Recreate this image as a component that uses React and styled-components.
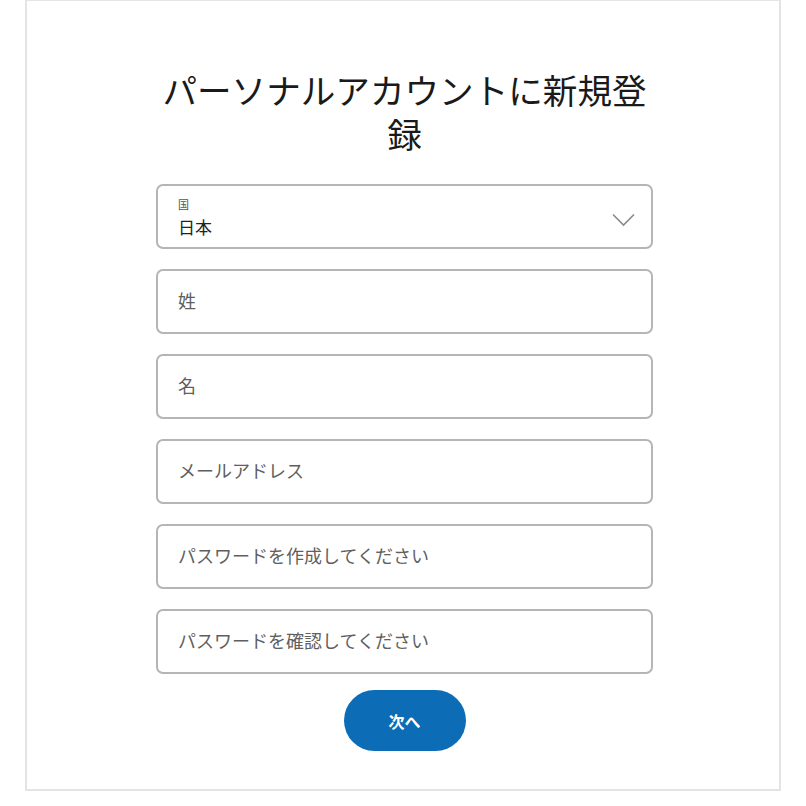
import React from "react";
import styled, { createGlobalStyle } from "styled-components";

const GlobalStyle = createGlobalStyle`
  html, body { margin: 0; padding: 0; background: #ffffff; }
  body { font-family: "Noto Sans CJK JP", "Noto Sans", sans-serif; }
  * { box-sizing: border-box; }
`;

const Frame = styled.div`
  margin-left: 25px;
  width: 756px;
  height: 791px;
  border: 2px solid #e4e4e4;
  border-top-width: 1px;
  display: flex;
  flex-direction: column;
  align-items: center;
  padding-top: 66px;
`;

const Column = styled.div`
  width: 497px;
  margin-left: 3px;
  display: flex;
  flex-direction: column;
  align-items: center;
`;

const Title = styled.h1`
  margin: 0 0 29px;
  width: 100%;
  font-family: "Noto Sans CJK JP", sans-serif;
  font-weight: 400;
  font-size: 34.6px;
  line-height: 44px;
  color: #1a1a1a;
  text-align: center;
`;

const Fields = styled.div`
  width: 100%;
  display: flex;
  flex-direction: column;
  gap: 20px;
`;

const Field = styled.div`
  position: relative;
  height: 65px;
  border: 2px solid #b5b5b5;
  border-radius: 7px;
  display: flex;
  flex-direction: column;
  justify-content: center;
  padding: 0 20px;
`;

const Placeholder = styled.span`
  font-size: 18px;
  line-height: 22px;
  color: #5f5f5f;
  margin-top: -3px;
`;

const SmallLabel = styled.span`
  font-size: 11px;
  line-height: 13px;
  color: #555;
  margin-top: 2px;
`;

const Value = styled.span`
  font-size: 17px;
  line-height: 22px;
  color: #222;
  margin-top: 5px;
`;

const Chevron = styled.svg`
  position: absolute;
  right: 16px;
  top: 50%;
  margin-top: -4px;
`;

const Button = styled.button`
  margin-top: 16px;
  width: 122px;
  height: 61px;
  border: none;
  border-radius: 31px;
  background: #0c6cb6;
  color: #fff;
  font-family: "Noto Sans CJK JP", sans-serif;
  font-weight: 700;
  font-size: 16px;
  cursor: pointer;
`;

export default function App() {
  const placeholders = [
    "姓",
    "名",
    "メールアドレス",
    "パスワードを作成してください",
    "パスワードを確認してください",
  ];
  return (
    <>
      <GlobalStyle />
      <Frame>
        <Column>
          <Title>パーソナルアカウントに新規登録</Title>
          <Fields>
            <Field>
              <SmallLabel>国</SmallLabel>
              <Value>日本</Value>
              <Chevron width="23" height="14" viewBox="0 0 23 14">
                <path d="M1 1.5 L11.5 12 L22 1.5" fill="none" stroke="#8a8a8a" strokeWidth="1.6" />
              </Chevron>
            </Field>
            {placeholders.map((p) => (
              <Field key={p}>
                <Placeholder>{p}</Placeholder>
              </Field>
            ))}
          </Fields>
          <Button>次へ</Button>
        </Column>
      </Frame>
    </>
  );
}
